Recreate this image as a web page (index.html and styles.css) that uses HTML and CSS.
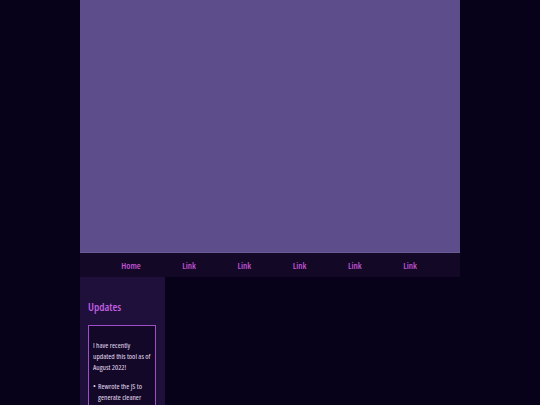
FILE: index.html
```html
<!DOCTYPE html>
<html>
<head>
<meta charset="utf-8">
<link rel="stylesheet" href="styles.css">
</head>
<body>
<div class="page">
  <header class="hero"></header>
  <nav class="nav">
    <a class="nav-link">Home</a>
    <a class="nav-link">Link</a>
    <a class="nav-link">Link</a>
    <a class="nav-link">Link</a>
    <a class="nav-link">Link</a>
    <a class="nav-link">Link</a>
  </nav>
  <div class="content">
    <aside class="sidebar">
      <h2 class="side-title">Updates</h2>
      <div class="update-box">
        <p class="update-text">I have recently updated this tool as of August 2022!</p>
        <ul class="update-list">
          <li>Rewrote the JS to generate cleaner code</li>
          <li>Added more options</li>
        </ul>
      </div>
    </aside>
    <main class="main"></main>
  </div>
</div>
</body>
</html>
```
FILE: styles.css
```css
html, body {
  margin: 0;
  padding: 0;
  background: #07011a;
  height: 100%;
  overflow: hidden;
}
body {
  font-family: "Open Sans", "Roboto", sans-serif;
  font-stretch: 75%;
}
.page {
  width: 380px;
  margin: 0 auto;
  display: flex;
  flex-direction: column;
}
.hero {
  height: 252px;
  background: #5d4e8b;
  border-bottom: 1px solid #6a5b97;
}
.nav {
  height: 24px;
  background: #140827;
  display: flex;
  align-items: center;
  padding-left: 20.6px;
}
.nav-link {
  width: 55.25px;
  text-align: center;
  color: #c254d4;
  font-size: 9px;
  font-weight: 600;
}
.nav-link:first-child {
  width: 60.8px;
}
.content {
  display: flex;
}
.sidebar {
  width: 77px;
  background: #1f0f3b;
  padding: 23px 0 0 8px;
  height: 200px;
}
.side-title {
  margin: 0 0 11px 0;
  color: #c25fe0;
  font-size: 11px;
  line-height: 14px;
  font-weight: 600;
}
.update-box {
  width: 58px;
  border: 1px solid #a050c6;
  background: #130828;
  padding: 14px 4px 0 4px;
  color: #e2daf0;
  font-size: 7.5px;
  line-height: 11px;
  height: 200px;
}
.update-text {
  margin: 0 0 8px 0;
}
.update-list {
  margin: 0;
  padding-left: 0;
  list-style: none;
}
.update-list li {
  padding-left: 5px;
  text-indent: -5px;
}
.update-list li::before {
  content: "•";
  display: inline-block;
  width: 5px;
  text-indent: 0;
}
.main {
  flex: 1;
}
```
